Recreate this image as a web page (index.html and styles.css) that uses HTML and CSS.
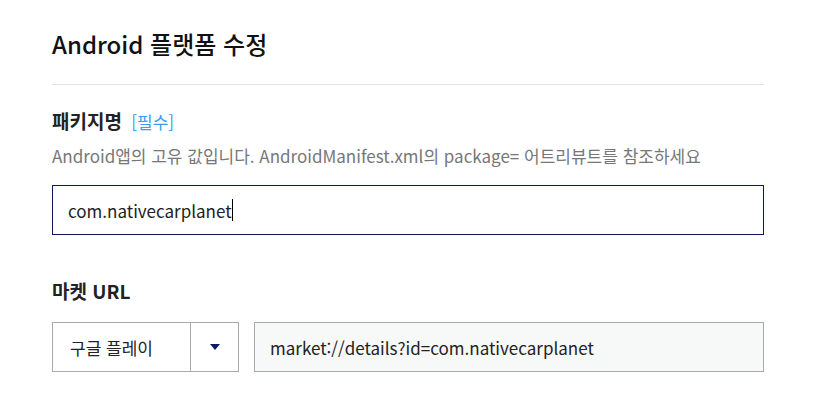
FILE: index.html
```
<!DOCTYPE html>
<html lang="ko">
<head>
<meta charset="utf-8">
<link rel="stylesheet" href="styles.css">
</head>
<body>
<div class="page">
  <h1 class="title">Android 플랫폼 수정</h1>
  <div class="section">
    <div class="label">패키지명 <span class="req">[필수]</span></div>
    <div class="desc">Android앱의 고유 값입니다. AndroidManifest.xml의 package= 어트리뷰트를 참조하세요</div>
    <div class="input focused"><span>com.nativecarplanet</span><span class="caret"></span></div>
  </div>
  <div class="section market">
    <div class="label">마켓 URL</div>
    <div class="row">
      <div class="select">
        <div class="select-text">구글 플레이</div>
        <div class="select-btn"><span class="tri"></span></div>
      </div>
      <div class="input readonly">market://details?id=com.nativecarplanet</div>
    </div>
  </div>
</div>
</body>
</html>
```
FILE: styles.css
```
* { box-sizing: border-box; }
html, body { margin: 0; padding: 0; background: #fff; }
body {
  font-family: "Noto Sans CJK KR", "Noto Sans", sans-serif;
  color: #222;
}
.page {
  width: 712px;
  margin-left: 52px;
  padding-top: 26px;
}
.title {
  margin: 0;
  font-size: 24px;
  font-weight: 500;
  line-height: 36px;
  padding-bottom: 22px;
  border-bottom: 1px solid #e2e2e2;
  color: #111;
}
.section { padding-top: 22px; }
.label {
  font-size: 19px;
  font-weight: 700;
  line-height: 28px;
  color: #222;
}
.req {
  font-size: 17px;
  font-weight: 400;
  color: #3b9cf3;
  margin-left: 4px;
}
.desc {
  font-size: 17px;
  color: #777;
  line-height: 26px;
  margin-top: 7px;
}
.input {
  height: 50px;
  border: 1px solid #aaa;
  display: flex;
  align-items: center;
  padding-left: 15px;
  font-size: 17px;
  color: #222;
}
.focused {
  margin-top: 16px;
  border-color: #0c1a66;
}
.caret {
  display: inline-block;
  width: 1px;
  height: 22px;
  background: #000;
}
.market { padding-top: 42px; }
.row {
  display: flex;
  gap: 15px;
  margin-top: 17px;
}
.select {
  width: 187px;
  height: 50px;
  border: 1px solid #aaa;
  display: flex;
}
.select-text {
  flex: 1;
  display: flex;
  align-items: center;
  padding-left: 17px;
  font-size: 17px;
  color: #222;
  border-right: 1px solid #aaa;
}
.select-btn {
  width: 47px;
  display: flex;
  align-items: center;
  justify-content: center;
}
.tri {
  width: 0; height: 0;
  border-left: 5px solid transparent;
  border-right: 5px solid transparent;
  border-top: 6px solid #0c1a66;
}
.readonly {
  flex: 1;
  background: #f7f8f8;
  padding-left: 15px;
}
```
